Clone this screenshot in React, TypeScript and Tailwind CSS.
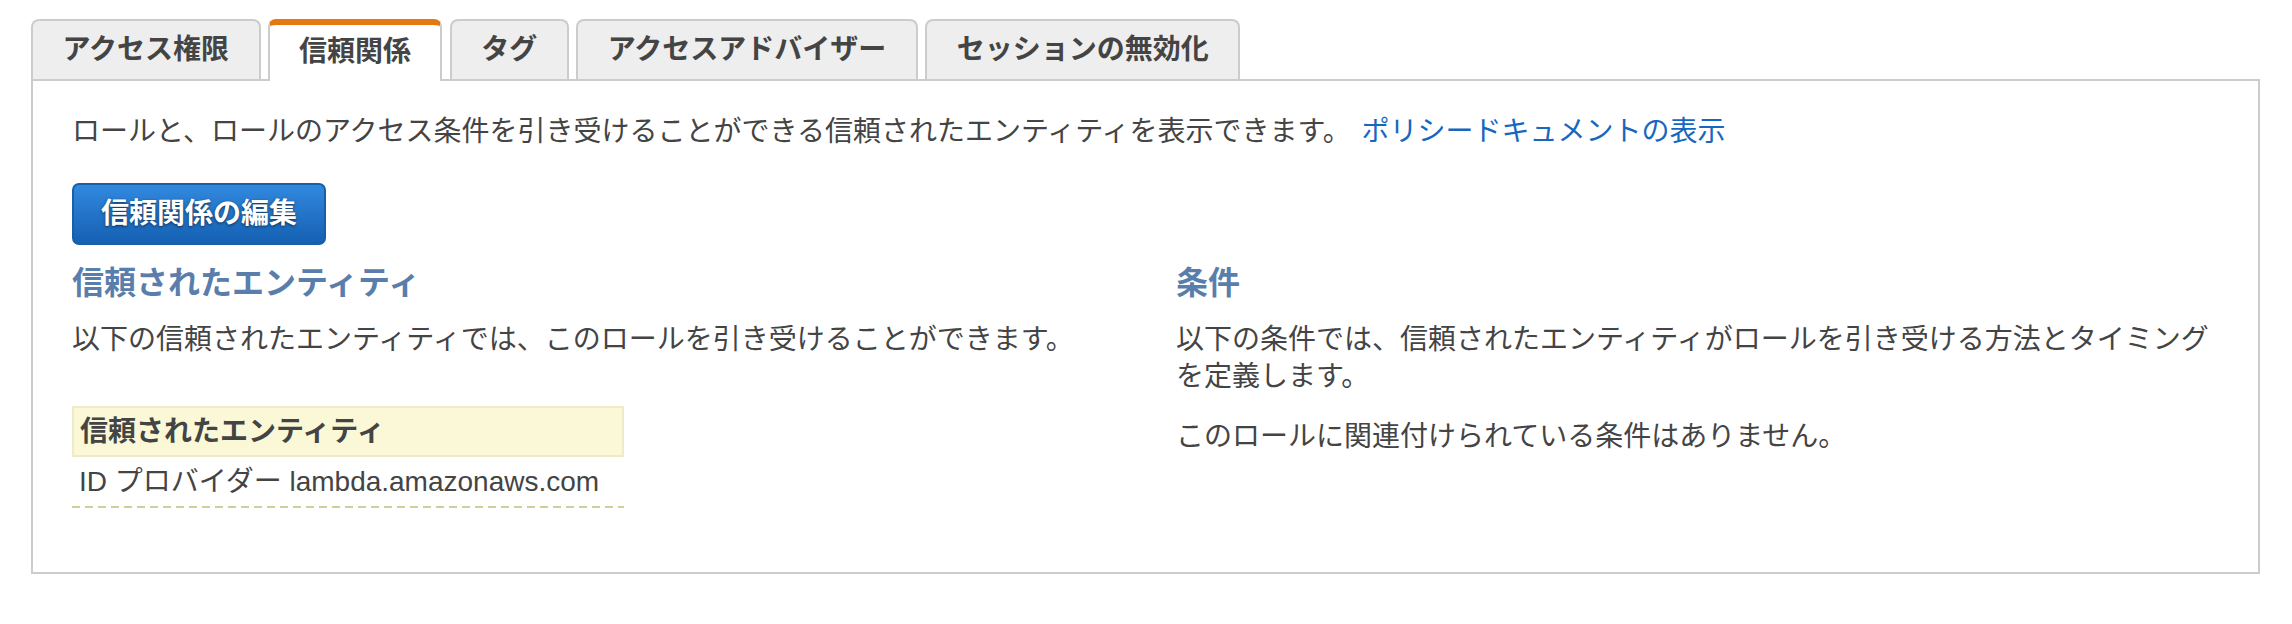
import React from "react";

const FONT = "font-['Liberation_Sans','Noto_Sans_CJK_JP',sans-serif]";

function Tab({ label, active }: { label: string; active?: boolean }) {
  if (active) {
    return (
      <div className="h-[62px] px-[29px] flex items-center bg-white border-x-2 border-t-[6px] border-x-[#cccccc] border-t-[#e47911] rounded-t-[8px] text-[28px] font-bold text-[#444444] leading-none pb-[2px]">
        {label}
      </div>
    );
  }
  return (
    <div className="h-[60px] px-[29.5px] flex items-center bg-[#eeeeee] border-x-2 border-t-2 border-[#cccccc] rounded-t-[8px] text-[28px] font-bold text-[#444444] leading-none">
      {label}
    </div>
  );
}

export default function App() {
  return (
    <div className={`${FONT} w-full h-[624px] bg-white pl-[31px] pt-[19px]`}>
      <div className="w-[2229px]">
        <div className="relative z-10 flex items-start gap-[7.5px] h-[62px] -mb-[2px]">
          <Tab label="アクセス権限" />
          <Tab label="信頼関係" active />
          <Tab label="タグ" />
          <Tab label="アクセスアドバイザー" />
          <Tab label="セッションの無効化" />
        </div>
        <div className="h-[495px] border-2 border-[#cccccc] bg-white pl-[39px] pr-[39px] pt-[32px] text-[#444444] text-[28px] leading-[38px]">
          <p>
            ロールと、ロールのアクセス条件を引き受けることができる信頼されたエンティティを表示できます。{" "}
            <a className="ml-[3px] text-[#1667c0] cursor-pointer">ポリシードキュメントの表示</a>
          </p>
          <button className="mt-[32px] h-[62px] px-[27px] rounded-[7px] border-2 border-[#1a5da8] bg-[linear-gradient(to_bottom,#3189de,#1560b3)] text-white font-bold text-[28px] leading-none [text-shadow:0_1px_3px_rgba(0,0,0,0.6)]">
            信頼関係の編集
          </button>
          <div className="mt-[18px] grid grid-cols-[1104px_1fr]">
            <div>
              <h2 className="text-[32px] leading-[40px] font-bold text-[#5a7eab]">信頼されたエンティティ</h2>
              <p className="mt-[18px]">以下の信頼されたエンティティでは、このロールを引き受けることができます。</p>
              <div className="mt-[47px] w-[552px]">
                <div className="h-[51px] bg-[#faf8d7] border-2 border-[#eeebc6] pl-[6px] flex items-center font-bold">
                  信頼されたエンティティ
                </div>
                <div className="h-[49px] pl-[7px] flex items-center">ID プロバイダー lambda.amazonaws.com</div>
                <div className="h-[2px] bg-[linear-gradient(to_right,#d0cf9c_0_8px,transparent_8px_13px)] bg-[length:13px_2px]" />
              </div>
            </div>
            <div>
              <h2 className="text-[32px] leading-[40px] font-bold text-[#5a7eab]">条件</h2>
              <p className="mt-[18px] leading-[37px]">
                以下の条件では、信頼されたエンティティがロールを引き受ける方法とタイミングを定義します。
              </p>
              <p className="mt-[23px] leading-[37px]">このロールに関連付けられている条件はありません。</p>
            </div>
          </div>
        </div>
      </div>
    </div>
  );
}
